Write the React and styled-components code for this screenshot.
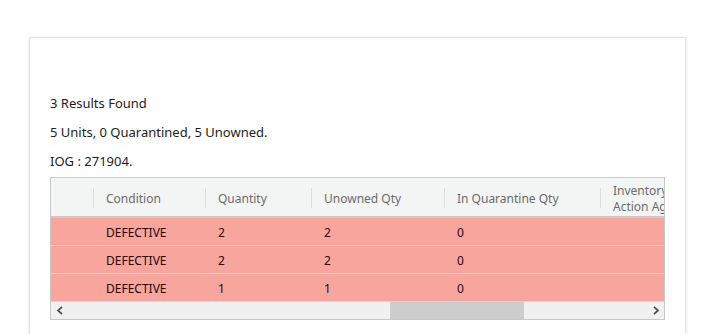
import React from "react";
import styled, { createGlobalStyle } from "styled-components";

const Global = createGlobalStyle`
  html, body { margin: 0; padding: 0; background: #ffffff; }
  body { font-family: "Segoe UI", "Noto Sans", "Open Sans", sans-serif; color: #1f1f1f; }
`;

const Page = styled.div`
  padding: 37px 31px 0 29px;
  height: 334px;
  box-sizing: border-box;
  overflow: hidden;
`;

const Card = styled.section`
  width: 657px;
  box-sizing: border-box;
  height: 320px;
  border: 1px solid #e4e4e4;
  border-bottom: none;
  box-shadow: 1px 0 2px rgba(0, 0, 0, 0.06), -1px 0 2px rgba(0, 0, 0, 0.05);
  padding: 55px 20px 0 20px;
  display: flex;
  flex-direction: column;
`;

const Line = styled.p`
  margin: 0 0 9px 0;
  font-size: 13px;
  line-height: 20px;
  color: #1c1c1c;
  &:last-of-type { margin-bottom: 6px; }
`;

const Grid = styled.div`
  width: 615px;
  box-sizing: border-box;
  border: 1px solid #c6c9c9;
  overflow: hidden;
`;

const Scroller = styled.div`
  overflow: hidden;
`;

const COLS = "42px 112px 106px 133px 156px 120px";

const HeadRow = styled.div`
  display: grid;
  grid-template-columns: ${COLS};
  height: 40px;
  box-sizing: border-box;
  background: #f3f4f4;
  border-bottom: 2px solid #c9cccc;
`;

const HeadCell = styled.div`
  position: relative;
  display: flex;
  align-items: center;
  padding: 3px 0 0 13px;
  font-size: 12px;
  line-height: 16px;
  color: #6b6b6b;
  white-space: nowrap;
  &::before {
    content: "";
    display: ${(p) => (p.$sep ? "block" : "none")};
    position: absolute;
    left: 0;
    top: 10px;
    bottom: 8px;
    width: 1px;
    background: #dcdede;
  }
`;

const Row = styled.div`
  display: grid;
  grid-template-columns: ${COLS};
  height: 28px;
  box-sizing: border-box;
  background: #f8a59e;
  border-bottom: 1px solid #e3d3d2;
`;

const Cell = styled.div`
  display: flex;
  align-items: center;
  padding: 2px 0 0 13px;
  font-size: 12px;
  color: #2a0606;
  white-space: nowrap;
`;

const ScrollBar = styled.div`
  height: 17px;
  background: #f0f0f0;
  display: flex;
  align-items: center;
`;

const Arrow = styled.div`
  width: 17px;
  height: 17px;
  display: flex;
  align-items: center;
  justify-content: center;
  flex: none;
`;

const Track = styled.div`
  flex: 1;
  height: 17px;
  display: flex;
  align-items: stretch;
`;

const Thumb = styled.div`
  margin-left: 322px;
  width: 134px;
  background: #cdcdcd;
`;

const Chevron = ({ dir }) => (
  <svg width="8" height="9" viewBox="0 0 8 9">
    <path
      d={dir === "left" ? "M6 0.8 L2 4.5 L6 8.2" : "M2 0.8 L6 4.5 L2 8.2"}
      fill="none"
      stroke="#505050"
      strokeWidth="1.8"
    />
  </svg>
);

const rows = [
  { cond: "DEFECTIVE", qty: "2", unowned: "2", quar: "0" },
  { cond: "DEFECTIVE", qty: "2", unowned: "2", quar: "0" },
  { cond: "DEFECTIVE", qty: "1", unowned: "1", quar: "0" },
];

export default function App() {
  return (
    <>
      <Global />
      <Page>
        <Card>
          <Line>3 Results Found</Line>
          <Line>5 Units, 0 Quarantined, 5 Unowned.</Line>
          <Line>IOG : 271904.</Line>
          <Grid>
            <Scroller>
              <HeadRow>
                <HeadCell />
                <HeadCell $sep>Condition</HeadCell>
                <HeadCell $sep>Quantity</HeadCell>
                <HeadCell $sep>Unowned Qty</HeadCell>
                <HeadCell $sep>In Quarantine Qty</HeadCell>
                <HeadCell $sep>
                  Inventory
                  <br />
                  Action Aging
                </HeadCell>
              </HeadRow>
              {rows.map((r, i) => (
                <Row key={i}>
                  <Cell />
                  <Cell>{r.cond}</Cell>
                  <Cell>{r.qty}</Cell>
                  <Cell>{r.unowned}</Cell>
                  <Cell>{r.quar}</Cell>
                  <Cell />
                </Row>
              ))}
            </Scroller>
            <ScrollBar>
              <Arrow>
                <Chevron dir="left" />
              </Arrow>
              <Track>
                <Thumb />
              </Track>
              <Arrow>
                <Chevron dir="right" />
              </Arrow>
            </ScrollBar>
          </Grid>
        </Card>
      </Page>
    </>
  );
}
